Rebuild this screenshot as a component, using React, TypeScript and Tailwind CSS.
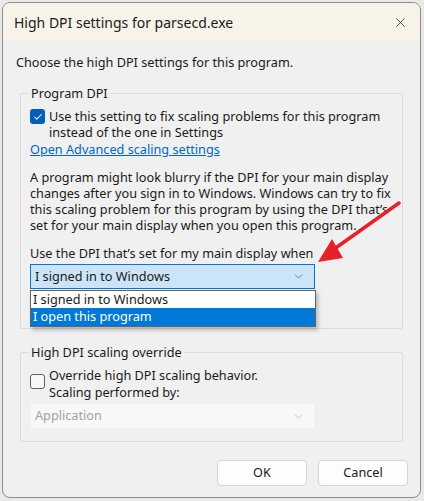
import { ChevronDown, X, Check } from "lucide-react"

const font = { fontFamily: '"Noto Sans", "Liberation Sans", sans-serif' }

function GroupBox({ title, className, children }: { title: string; className?: string; children: React.ReactNode }) {
  return (
    <fieldset className={"mx-[17px] border border-[#dcdcdc] rounded-[2px] px-[9px] " + (className ?? "")}>
      <legend className="ml-[-1px] px-[2px] text-[12.7px] leading-[14px] text-[#1a1a1a]">{title}</legend>
      {children}
    </fieldset>
  )
}

export default function App() {
  return (
    <div className="w-[424px] h-[501px] bg-[#e9e9e9] pt-[2px] pl-[2px]" style={font}>
      <div className="w-[419px] h-[496px] rounded-[8px] border border-[#8c8c8c] bg-[#f0f0f0] overflow-hidden flex flex-col">
        {/* 标题栏 */}
        <div className="h-[38px] bg-[#f8f3e9] flex items-center pl-[11px] pr-[12px] shrink-0">
          <span className="text-[14px] text-[#1a1a1a]">High DPI settings for parsecd.exe</span>
          <X className="ml-auto w-[15px] h-[15px] text-[#1a1a1a]" strokeWidth={1.2} />
        </div>

        <div className="relative flex-1 flex flex-col">
          <p className="mt-[14px] ml-[13px] text-[12.7px] leading-[14px] text-[#1a1a1a]">
            Choose the high DPI settings for this program.
          </p>

          <GroupBox title="Program DPI" className="mt-[17px] h-[243px]">
            <div className="flex items-start gap-[4px] mt-[8px]">
              <span className="mt-[1px] w-[15px] h-[15px] rounded-[3px] bg-[#005fb8] flex items-center justify-center shrink-0">
                <Check className="w-[10px] h-[10px] text-white" strokeWidth={2.5} />
              </span>
              <span className="text-[12.7px] leading-[16px] text-[#1a1a1a]">
                Use this setting to fix scaling problems for this program
                <br />
                instead of the one in Settings
              </span>
            </div>
            <a className="block mt-[1px] text-[12.7px] leading-[16px] text-[#0066cc] underline">Open Advanced scaling settings</a>

            <p className="mt-[12px] text-[12.7px] leading-[16px] text-[#1a1a1a]">
              A program might look blurry if the DPI for your main display
              <br />
              changes after you sign in to Windows. Windows can try to fix
              <br />
              this scaling problem for this program by using the DPI that’s
              <br />
              set for your main display when you open this program.
            </p>

            <p className="mt-[12px] text-[12.7px] leading-[16px] text-[#1a1a1a]">Use the DPI that’s set for my main display when</p>

            <div className="relative mt-[3px] w-[285px]">
              <div className="h-[25px] border border-[#0078d4] bg-[#cce4f7] flex items-center pl-[4px] pr-[9px]">
                <span className="text-[12.7px] text-[#1a1a1a]">I signed in to Windows</span>
                <ChevronDown className="ml-auto w-[13px] h-[13px] text-[#5a5a5a]" strokeWidth={1.3} />
              </div>
              <div className="absolute left-0 top-[26px] w-[286px] border border-[#646464] bg-white shadow-[2px_3px_4px_rgba(0,0,0,0.25)]">
                <div className="h-[17px] flex items-center pl-[2px] text-[12.7px] text-[#1a1a1a]">I signed in to Windows</div>
                <div className="h-[18px] flex items-center pl-[2px] text-[12.7px] text-white bg-[#0078d7]">I open this program</div>
              </div>
            </div>
          </GroupBox>

          <GroupBox title="High DPI scaling override" className="mt-[16px] h-[97px]">
            <div className="flex items-start gap-[4px] mt-[8px]">
              <span className="mt-[7px] w-[15px] h-[15px] rounded-[3px] border border-[#5f5f5f] bg-[#f7f7f7] shrink-0" />
              <span className="text-[12.7px] leading-[17px] text-[#1a1a1a]">
                Override high DPI scaling behavior.
                <br />
                Scaling performed by:
              </span>
            </div>
            <div className="mt-[3px] ml-[1px] w-[283px] h-[24px] bg-[#f8f8f8] flex items-center pl-[4px] pr-[9px]">
              <span className="text-[12.7px] text-[#a2a2a2]">Application</span>
              <ChevronDown className="ml-auto w-[13px] h-[13px] text-[#b5b5b5]" strokeWidth={1.3} />
            </div>
          </GroupBox>

          <div className="mt-auto mb-[11px] mr-[12px] flex justify-end gap-[11px]">
            <button className="w-[90px] h-[26px] rounded-[4px] border border-[#d4d4d4] bg-[#fdfdfd] text-[12.7px] text-[#1a1a1a]">OK</button>
            <button className="w-[90px] h-[26px] rounded-[4px] border border-[#d4d4d4] bg-[#fdfdfd] text-[12.7px] text-[#1a1a1a]">Cancel</button>
          </div>
        </div>
      </div>

      {/* 红色箭头标注 */}
      <svg className="absolute left-0 top-0 pointer-events-none" width="424" height="501">
        <line x1="399" y1="203" x2="330" y2="252" stroke="#e8202a" strokeWidth="3.5" strokeLinecap="round" />
        <polygon points="318,262 332,239 343,258" fill="#e8202a" />
      </svg>
    </div>
  )
}
